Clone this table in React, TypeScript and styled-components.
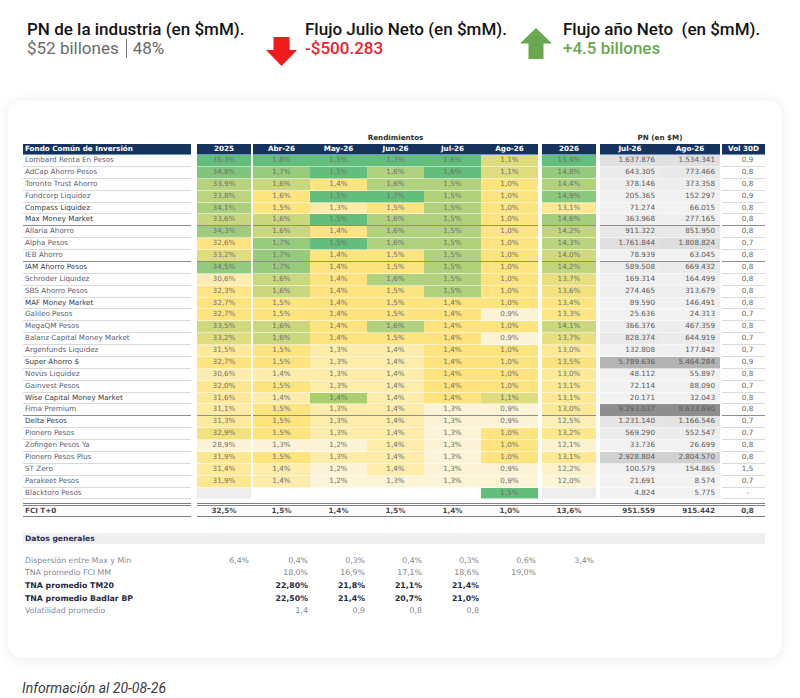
import React from "react";
import styled, { createGlobalStyle } from "styled-components";

const GlobalStyle = createGlobalStyle`
  html, body {
    margin: 0;
    padding: 0;
    background: #ffffff;
  }
  body {
    font-family: "Roboto", "Liberation Sans", sans-serif;
    width: 800px;
    height: 698px;
    overflow: hidden;
  }
`;

// name | gap | 2025 | gap | 5 months | gap | 2026 | gap | PN x2 | gap | vol
const GRID = "168px 6px 54px 2px repeat(5, 57px) 4px 54px 4px 60px 60px 2px 43px";
const ROW_H = 11.88;

const NAVY = "#16335d";
const CREAM = [253, 243, 214];
const YELLOW = [254, 228, 126];
const GREEN = [99, 190, 123];
const GRAY_LO = [242, 242, 242];
const GRAY_HI = [142, 142, 142];

type Fund = {
  name: string;
  y25: number | null;
  m: (number | null)[];
  y26: number | null;
  pn: [number, number];
  vol: string;
  strong?: boolean;
};

const funds: Fund[] = [
  { name: "Lombard Renta En Pesos", y25: 35.3, m: [1.8, 1.5, 1.7, 1.6, 1.1], y26: 15.4, pn: [1637876, 1534341], vol: "0,9" },
  { name: "AdCap Ahorro Pesos", y25: 34.8, m: [1.7, 1.5, 1.6, 1.6, 1.1], y26: 14.8, pn: [643305, 773466], vol: "0,8" },
  { name: "Toronto Trust Ahorro", y25: 33.9, m: [1.6, 1.4, 1.6, 1.5, 1.0], y26: 14.4, pn: [378146, 373358], vol: "0,8" },
  { name: "Fundcorp Liquidez", y25: 33.8, m: [1.6, 1.5, 1.7, 1.5, 1.0], y26: 14.9, pn: [205365, 152297], vol: "0,9" },
  { name: "Compass Liquidez", y25: 34.1, m: [1.5, 1.3, 1.5, 1.5, 1.0], y26: 13.1, pn: [71274, 66015], vol: "0,8", strong: true },
  { name: "Max Money Market", y25: 33.6, m: [1.6, 1.5, 1.6, 1.5, 1.0], y26: 14.6, pn: [363968, 277165], vol: "0,8", strong: true },
  { name: "Allaria Ahorro", y25: 34.3, m: [1.6, 1.4, 1.6, 1.5, 1.0], y26: 14.2, pn: [911322, 851950], vol: "0,8" },
  { name: "Alpha Pesos", y25: 32.6, m: [1.7, 1.5, 1.6, 1.5, 1.0], y26: 14.3, pn: [1761844, 1808824], vol: "0,7" },
  { name: "IEB Ahorro", y25: 33.2, m: [1.7, 1.4, 1.5, 1.5, 1.0], y26: 14.0, pn: [78939, 63045], vol: "0,8" },
  { name: "IAM Ahorro Pesos", y25: 34.5, m: [1.7, 1.4, 1.5, 1.5, 1.0], y26: 14.2, pn: [589508, 669432], vol: "0,8", strong: true },
  { name: "Schroder Liquidez", y25: 30.6, m: [1.6, 1.4, 1.6, 1.5, 1.0], y26: 13.7, pn: [169314, 164499], vol: "0,8" },
  { name: "SBS Ahorro Pesos", y25: 32.3, m: [1.6, 1.4, 1.5, 1.5, 1.0], y26: 13.6, pn: [274465, 313679], vol: "0,8" },
  { name: "MAF Money Market", y25: 32.7, m: [1.5, 1.4, 1.5, 1.4, 1.0], y26: 13.4, pn: [89590, 146491], vol: "0,8", strong: true },
  { name: "Galileo Pesos", y25: 32.7, m: [1.5, 1.4, 1.5, 1.4, 0.9], y26: 13.3, pn: [25636, 24313], vol: "0,7" },
  { name: "MegaQM Pesos", y25: 33.5, m: [1.6, 1.4, 1.6, 1.4, 1.0], y26: 14.1, pn: [366376, 467359], vol: "0,8" },
  { name: "Balanz Capital Money Market", y25: 33.2, m: [1.6, 1.4, 1.5, 1.4, 0.9], y26: 13.7, pn: [828374, 644919], vol: "0,7" },
  { name: "Argenfunds Liquidez", y25: 31.5, m: [1.5, 1.3, 1.4, 1.4, 1.0], y26: 13.0, pn: [132808, 177842], vol: "0,7" },
  { name: "Super Ahorro $", y25: 32.7, m: [1.5, 1.3, 1.4, 1.4, 1.0], y26: 13.5, pn: [5789636, 5464284], vol: "0,9", strong: true },
  { name: "Novus Liquidez", y25: 30.6, m: [1.4, 1.3, 1.4, 1.4, 1.0], y26: 13.0, pn: [48112, 55897], vol: "0,8" },
  { name: "Gainvest Pesos", y25: 32.0, m: [1.5, 1.3, 1.4, 1.4, 1.0], y26: 13.1, pn: [72114, 88090], vol: "0,7" },
  { name: "Wise Capital Money Market", y25: 31.6, m: [1.4, 1.4, 1.4, 1.4, 1.1], y26: 13.1, pn: [20171, 32043], vol: "0,8", strong: true },
  { name: "Fima Premium", y25: 31.1, m: [1.5, 1.3, 1.4, 1.3, 0.9], y26: 13.0, pn: [9293037, 8633690], vol: "0,8" },
  { name: "Delta Pesos", y25: 31.3, m: [1.5, 1.3, 1.4, 1.3, 0.9], y26: 12.5, pn: [1231140, 1166546], vol: "0,7", strong: true },
  { name: "Pionero Pesos", y25: 32.9, m: [1.5, 1.3, 1.4, 1.3, 1.0], y26: 13.2, pn: [569290, 552547], vol: "0,7" },
  { name: "Zofingen Pesos Ya", y25: 28.9, m: [1.3, 1.2, 1.4, 1.3, 1.0], y26: 12.1, pn: [33736, 26699], vol: "0,8" },
  { name: "Pionero Pesos Plus", y25: 31.9, m: [1.5, 1.3, 1.4, 1.3, 1.0], y26: 13.1, pn: [2928804, 2804570], vol: "0,8" },
  { name: "ST Zero", y25: 31.4, m: [1.4, 1.2, 1.4, 1.3, 0.9], y26: 12.2, pn: [100579, 154865], vol: "1,5" },
  { name: "Parakeet Pesos", y25: 31.9, m: [1.4, 1.2, 1.3, 1.3, 0.9], y26: 12.0, pn: [21691, 8574], vol: "0,7" },
  { name: "Blacktoro Pesos", y25: null, m: [null, null, null, null, 1.5], y26: null, pn: [4824, 5775], vol: "-" },
];

// rows followed by a darker rule
const SEPARATED = new Set([5, 8, 21]);

// a few cells the sheet colours differently from a plain scale
const OVERRIDES: Record<string, string> = {
  "3-m0": "#fde47e",
  "20-m1": "#a9cf6f",
};

const months = ["Abr-26", "May-26", "Jun-26", "Jul-26", "Ago-26"];

const mix = (a: number[], b: number[], t: number) => {
  const c = a.map((v, i) => Math.round(v + (b[i] - v) * Math.max(0, Math.min(1, t))));
  return `rgb(${c[0]}, ${c[1]}, ${c[2]})`;
};

const scaleFor = (values: (number | null)[]) => {
  const s = values.filter((v): v is number => v !== null).sort((a, b) => a - b);
  const min = s[0];
  const max = s[s.length - 1];
  const pos = (s.length - 1) / 2;
  const med = s[Math.floor(pos)] + (s[Math.ceil(pos)] - s[Math.floor(pos)]) * (pos - Math.floor(pos));
  return (v: number) =>
    v <= med
      ? mix(CREAM, YELLOW, med === min ? 1 : (v - min) / (med - min))
      : mix(YELLOW, GREEN, (v - med) / (max - med));
};

const heat25 = scaleFor(funds.map((f) => f.y25));
const heat26 = scaleFor(funds.map((f) => f.y26));
const heatMonths = months.map((_, k) => scaleFor(funds.map((f) => f.m[k])));
const pnMax = [0, 1].map((k) => Math.max(...funds.map((f) => f.pn[k])));
const pnColor = (v: number, k: number) => mix(GRAY_LO, GRAY_HI, v / pnMax[k]);

const pct = (v: number) => v.toFixed(1).replace(".", ",") + "%";
const thousands = (n: number) => n.toString().replace(/\B(?=(\d{3})+(?!\d))/g, ".");

const Page = styled.div`
  width: 800px;
`;

const TopBar = styled.div`
  display: flex;
  align-items: flex-start;
  height: 100px;
  box-sizing: border-box;
  padding: 20px 0 0 27px;
`;

const Stat = styled.div<{ $w: number }>`
  width: ${(p) => p.$w}px;
  flex-shrink: 0;
`;

const StatTitle = styled.div`
  font-size: 17px;
  line-height: 19px;
  font-weight: 500;
  color: #141414;
  white-space: nowrap;
`;

const StatValue = styled.div<{ $color: string; $weight?: number }>`
  display: flex;
  align-items: center;
  font-size: 17px;
  line-height: 19px;
  font-weight: ${(p) => p.$weight ?? 400};
  color: ${(p) => p.$color};
  white-space: nowrap;
`;

const Divider = styled.span`
  display: inline-block;
  width: 1px;
  height: 19px;
  background: #7a7a7a;
  margin: 0 6px 0 7px;
`;

const ArrowBox = styled.div<{ $top: number; $right: number }>`
  flex-shrink: 0;
  margin-top: ${(p) => p.$top}px;
  margin-right: ${(p) => p.$right}px;
  line-height: 0;
`;

const Card = styled.div`
  margin-left: 8px;
  width: 774px;
  box-sizing: border-box;
  padding: 31px 17px 40px 15px;
  background: #ffffff;
  border-radius: 14px;
  box-shadow: 0 2px 14px rgba(0, 0, 0, 0.08), 0 0 2px rgba(0, 0, 0, 0.04);
  font-family: "DejaVu Sans", "Verdana", sans-serif;
  font-size: 7.2px;
`;

const Grid = styled.div<{ $h: number }>`
  display: grid;
  grid-template-columns: ${GRID};
  height: ${(p) => p.$h}px;
`;

const GroupTitle = styled.div<{ $cols: string }>`
  grid-column: ${(p) => p.$cols};
  text-align: center;
  font-weight: bold;
  color: #2f2f2f;
  line-height: 13px;
`;

const HeadCell = styled.div<{ $left?: boolean }>`
  background: ${NAVY};
  color: #ffffff;
  font-weight: bold;
  line-height: 10px;
  height: 10px;
  border-bottom: 1px solid #6d93c3;
  text-align: ${(p) => (p.$left ? "left" : "center")};
  padding-left: ${(p) => (p.$left ? "2px" : "0")};
  white-space: nowrap;
`;

const Gap = styled.div``;

const Cell = styled.div<{ $sep?: boolean }>`
  box-sizing: border-box;
  height: ${ROW_H}px;
  line-height: ${ROW_H - 1}px;
  white-space: nowrap;
  border-bottom: 1px solid ${(p) => (p.$sep ? "#8d8d8d" : "rgba(255, 255, 255, 0.55)")};
`;

const NameCell = styled(Cell)<{ $strong?: boolean }>`
  padding-left: 2px;
  color: ${(p) => (p.$strong ? "#363b4c" : "#5b6072")};
  border-bottom-color: ${(p) => (p.$sep ? "#8d8d8d" : "#d9d9d9")};
  overflow: hidden;
`;

const HeatCell = styled(Cell)<{ $bg: string }>`
  background: ${(p) => p.$bg};
  color: #6f716a;
  text-align: center;
`;

const PnCell = styled(Cell)<{ $bg: string }>`
  background: ${(p) => p.$bg};
  color: #585858;
  text-align: right;
  padding-right: 5px;
`;

const VolCell = styled(Cell)`
  color: #666666;
  text-align: center;
  padding-left: 8px;
  border-bottom-color: ${(p) => (p.$sep ? "#8d8d8d" : "#dcdcdc")};
`;

const FooterGrid = styled(Grid)`
  margin-top: 3.5px;
`;

const FootCell = styled.div<{ $align?: string }>`
  box-sizing: border-box;
  height: 14px;
  line-height: 10px;
  font-weight: bold;
  color: #4a4a4a;
  text-align: ${(p) => p.$align ?? "center"};
  padding: ${(p) => (p.$align === "right" ? "0 5px 0 0" : p.$align === "left" ? "0 0 0 2px" : "0")};
  border-top: 3px double #808080;
  border-bottom: 1px solid #808080;
`;

const FootGap = styled.div<{ $line?: boolean }>`
  box-sizing: border-box;
  height: 14px;
  border-top: ${(p) => (p.$line ? "3px double #808080" : "none")};
  border-bottom: ${(p) => (p.$line ? "1px solid #808080" : "none")};
`;

const FootVol = styled(FootCell)`
  padding-left: 8px;
`;

const DatosBand = styled.div`
  margin-top: 16px;
  height: 11px;
  line-height: 11px;
  background: #efefef;
  padding-left: 2px;
  font-size: 7.6px;
  font-weight: bold;
  color: #2c3157;
`;

const DatosList = styled.div`
  margin-top: 11px;
  font-size: 7.8px;
`;

const DatosLabel = styled.div<{ $bold?: boolean }>`
  grid-column: 1 / 3;
  padding-left: 2px;
  line-height: 12.6px;
  white-space: nowrap;
  font-weight: ${(p) => (p.$bold ? "bold" : "normal")};
  color: ${(p) => (p.$bold ? "#262a40" : "#868b9c")};
`;

const DatosValue = styled.div<{ $col: number; $bold?: boolean }>`
  grid-column: ${(p) => p.$col};
  grid-row: 1;
  text-align: right;
  padding-right: 2px;
  line-height: 12.6px;
  font-weight: ${(p) => (p.$bold ? "bold" : "normal")};
  color: ${(p) => (p.$bold ? "#262a40" : "#868686")};
`;

const Note = styled.div`
  margin-top: 23px;
  padding-left: 22px;
  font-size: 14px;
  line-height: 14px;
  font-style: italic;
  color: #3c3c3c;
`;

const DownArrow = () => (
  <svg width="31" height="29" viewBox="0 0 31 29">
    <rect x="7.5" y="0" width="16" height="13.5" fill="#f21b1b" />
    <polygon points="0,13 31,13 15.5,29" fill="#f21b1b" />
  </svg>
);

const UpArrow = () => (
  <svg width="32" height="31" viewBox="0 0 32 31">
    <polygon points="16,0 32,15.5 0,15.5" fill="#6aa84f" />
    <rect x="8.5" y="15" width="15" height="16" fill="#6aa84f" />
  </svg>
);

const FundRow = ({ f, i }: { f: Fund; i: number }) => {
  const sep = SEPARATED.has(i);
  return (
    <Grid $h={ROW_H}>
      <NameCell $sep={sep} $strong={f.strong}>{f.name}</NameCell>
      <Gap />
      {f.y25 === null ? (
        <HeatCell $bg="#eeeeee" $sep={sep} />
      ) : (
        <HeatCell $bg={heat25(f.y25)} $sep={sep}>{pct(f.y25)}</HeatCell>
      )}
      <Gap />
      {f.m.map((v, k) =>
        v === null ? (
          <HeatCell key={k} $bg="#ffffff" $sep={sep} />
        ) : (
          <HeatCell key={k} $bg={OVERRIDES[`${i}-m${k}`] ?? heatMonths[k](v)} $sep={sep}>
            {pct(v)}
          </HeatCell>
        )
      )}
      <Gap />
      {f.y26 === null ? (
        <HeatCell $bg="#eeeeee" $sep={sep} />
      ) : (
        <HeatCell $bg={heat26(f.y26)} $sep={sep}>{pct(f.y26)}</HeatCell>
      )}
      <Gap />
      {f.pn.map((v, k) => (
        <PnCell key={k} $bg={pnColor(v, k)} $sep={sep}>
          {thousands(v)}
        </PnCell>
      ))}
      <Gap />
      <VolCell $sep={sep}>{f.vol}</VolCell>
    </Grid>
  );
};

const datos: { label: string; bold?: boolean; values: [number, string][] }[] = [
  {
    label: "Dispersión entre Max y Min",
    values: [[3, "6,4%"], [5, "0,4%"], [6, "0,3%"], [7, "0,4%"], [8, "0,3%"], [9, "0,6%"], [11, "3,4%"]],
  },
  {
    label: "TNA promedio FCI MM",
    values: [[5, "18,0%"], [6, "16,9%"], [7, "17,1%"], [8, "18,6%"], [9, "19,0%"]],
  },
  {
    label: "TNA promedio TM20",
    bold: true,
    values: [[5, "22,80%"], [6, "21,8%"], [7, "21,1%"], [8, "21,4%"]],
  },
  {
    label: "TNA promedio Badlar BP",
    bold: true,
    values: [[5, "22,50%"], [6, "21,4%"], [7, "20,7%"], [8, "21,0%"]],
  },
  {
    label: "Volatilidad promedio",
    values: [[5, "1,4"], [6, "0,9"], [7, "0,8"], [8, "0,8"]],
  },
];

export default function App() {
  return (
    <Page>
      <GlobalStyle />
      <TopBar>
        <Stat $w={239}>
          <StatTitle>PN de la industria (en $mM).</StatTitle>
          <StatValue $color="#6b6b6b">
            $52 billones<Divider />48%
          </StatValue>
        </Stat>
        <ArrowBox $top={17} $right={8}>
          <DownArrow />
        </ArrowBox>
        <Stat $w={215}>
          <StatTitle>Flujo Julio Neto (en $mM).</StatTitle>
          <StatValue $color="#e8232b" $weight={500}>-$500.283</StatValue>
        </Stat>
        <ArrowBox $top={8} $right={11}>
          <UpArrow />
        </ArrowBox>
        <Stat $w={230}>
          <StatTitle>Flujo año Neto&nbsp; (en $mM).</StatTitle>
          <StatValue $color="#6aa84f" $weight={500}>+4.5 billones</StatValue>
        </Stat>
      </TopBar>

      <Card>
        <Grid $h={13}>
          <GroupTitle $cols="5 / 10">Rendimientos</GroupTitle>
          <GroupTitle $cols="13 / 15">PN (en $M)</GroupTitle>
        </Grid>
        <Grid $h={11}>
          <HeadCell $left>Fondo Común de Inversión</HeadCell>
          <Gap />
          <HeadCell>2025</HeadCell>
          <Gap />
          {months.map((m) => (
            <HeadCell key={m}>{m}</HeadCell>
          ))}
          <Gap />
          <HeadCell>2026</HeadCell>
          <Gap />
          <HeadCell>Jul-26</HeadCell>
          <HeadCell>Ago-26</HeadCell>
          <Gap />
          <HeadCell>Vol 30D</HeadCell>
        </Grid>

        {funds.map((f, i) => (
          <FundRow key={f.name} f={f} i={i} />
        ))}

        <FooterGrid $h={14}>
          <FootCell $align="left">FCI T+0</FootCell>
          <FootGap />
          <FootCell>32,5%</FootCell>
          <FootGap $line />
          {["1,5%", "1,4%", "1,5%", "1,4%", "1,0%"].map((v, k) => (
            <FootCell key={k}>{v}</FootCell>
          ))}
          <FootGap $line />
          <FootCell>13,6%</FootCell>
          <FootGap $line />
          <FootCell $align="right">951.559</FootCell>
          <FootCell $align="right">915.442</FootCell>
          <FootGap $line />
          <FootVol>0,8</FootVol>
        </FooterGrid>

        <DatosBand>Datos generales</DatosBand>
        <DatosList>
          {datos.map((d) => (
            <Grid key={d.label} $h={12.6}>
              <DatosLabel $bold={d.bold}>{d.label}</DatosLabel>
              {d.values.map(([col, v]) => (
                <DatosValue key={col} $col={col} $bold={d.bold}>
                  {v}
                </DatosValue>
              ))}
            </Grid>
          ))}
        </DatosList>
      </Card>

      <Note>Información al 20-08-26</Note>
    </Page>
  );
}
